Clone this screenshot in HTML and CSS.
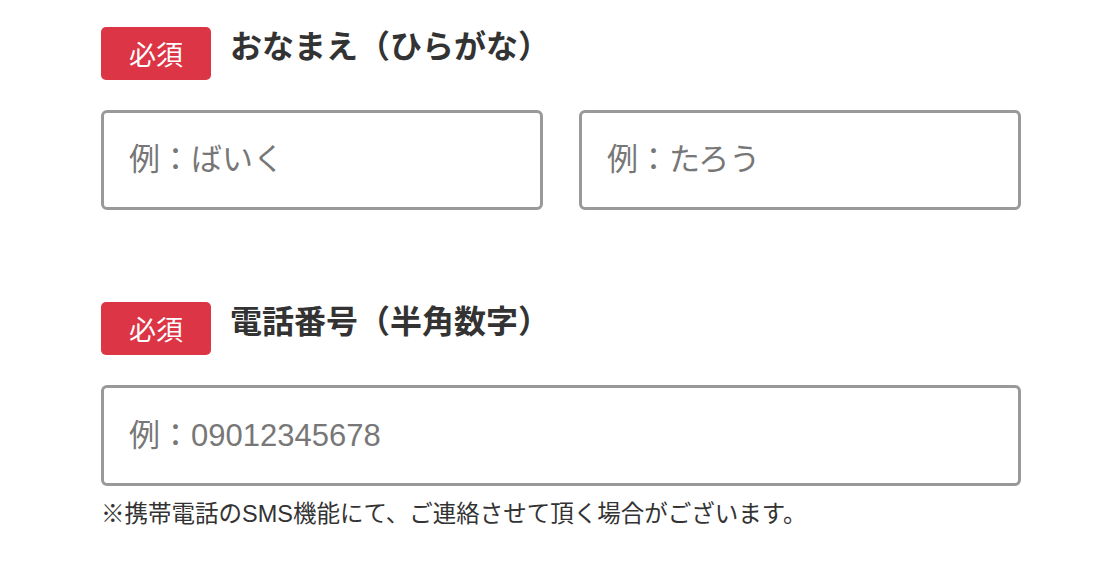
FILE: index.html
```html
<!DOCTYPE html>
<html lang="ja">
<head>
    <meta charset="UTF-8">
    <meta name="viewport" content="width=device-width, initial-scale=1.0">
    <title>お申し込みフォーム</title>
    <link rel="stylesheet" href="styles.css">
</head>
<body>
    <form class="entry-form">
        <div class="field">
            <div class="field-head">
                <span class="badge">必須</span>
                <label class="field-title" for="last-kana">おなまえ（ひらがな）</label>
            </div>
            <div class="input-row two">
                <input type="text" id="last-kana" placeholder="例：ばいく">
                <input type="text" id="first-kana" placeholder="例：たろう">
            </div>
        </div>

        <div class="field">
            <div class="field-head">
                <span class="badge">必須</span>
                <label class="field-title" for="tel">電話番号（半角数字）</label>
            </div>
            <div class="input-row">
                <input type="tel" id="tel" class="tall" placeholder="例：09012345678">
            </div>
            <p class="note">※携帯電話のSMS機能にて、ご連絡させて頂く場合がございます。</p>
        </div>
    </form>
</body>
</html>
```

FILE: styles.css
```css
body {
    margin: 0;
    background: #ffffff;
    color: #333333;
    font-family: 'Liberation Sans', 'Noto Sans CJK JP', sans-serif;
}
.entry-form {
    width: 920px;
    padding: 27px 0 0 101px;
}
.field + .field {
    margin-top: 92px;
}
.field-head {
    display: flex;
    align-items: flex-start;
    gap: 19px;
}
.badge {
    display: flex;
    align-items: center;
    justify-content: center;
    width: 110px;
    height: 53px;
    border-radius: 5px;
    background-color: #dc3545;
    color: #ffffff;
    font-size: 27px;
}
.field-title {
    font-size: 32px;
    font-weight: bold;
    line-height: 40px;
    color: #333333;
}
.input-row {
    margin-top: 30px;
    display: grid;
    grid-template-columns: 1fr;
}
.input-row.two {
    grid-template-columns: 1fr 1fr;
    gap: 36px;
}
input {
    box-sizing: border-box;
    width: 100%;
    height: 100px;
    margin: 0;
    padding: 0 25px;
    border: 3px solid #999999;
    border-radius: 6px;
    background: #ffffff;
    font-family: inherit;
    font-size: 31px;
    color: #333333;
    outline: none;
}
input.tall {
    height: 101px;
}
input::placeholder {
    color: #777777;
}
.note {
    margin: 10px 0 0;
    font-size: 23.5px;
    line-height: 36px;
    color: #333333;
}
```
